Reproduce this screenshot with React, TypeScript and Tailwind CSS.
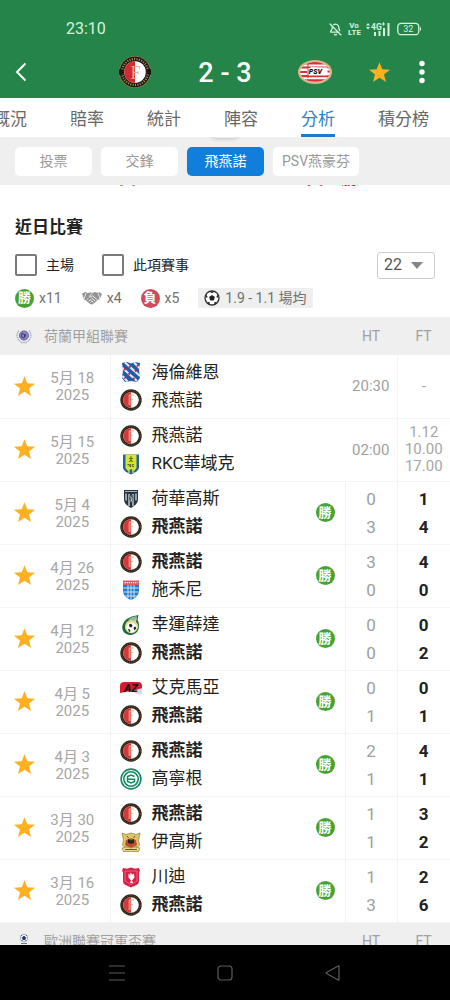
import { useState } from "react";
import { BellOff } from "lucide-react";

type TeamId =
  | "feyenoord" | "heerenveen" | "rkc" | "heracles" | "zwolle"
  | "sittard" | "az" | "groningen" | "eagles" | "twente";

interface Match {
  day: string;
  home: TeamId;
  away: TeamId;
  winner?: "home" | "away";
  ht?: [number, number];
  ft?: [number, number];
  time?: string;
  odds?: string[];
}

const names: Record<TeamId, string> = {
  feyenoord: "飛燕諾",
  heerenveen: "海倫維恩",
  rkc: "RKC華域克",
  heracles: "荷華高斯",
  zwolle: "施禾尼",
  sittard: "幸運薛達",
  az: "艾克馬亞",
  groningen: "高寧根",
  eagles: "伊高斯",
  twente: "川迪",
};

const matches: Match[] = [
  { day: "5月 18", home: "heerenveen", away: "feyenoord", time: "20:30", odds: ["-"] },
  { day: "5月 15", home: "feyenoord", away: "rkc", time: "02:00", odds: ["1.12", "10.00", "17.00"] },
  { day: "5月 4", home: "heracles", away: "feyenoord", winner: "away", ht: [0, 3], ft: [1, 4] },
  { day: "4月 26", home: "feyenoord", away: "zwolle", winner: "home", ht: [3, 0], ft: [4, 0] },
  { day: "4月 12", home: "sittard", away: "feyenoord", winner: "away", ht: [0, 0], ft: [0, 2] },
  { day: "4月 5", home: "az", away: "feyenoord", winner: "away", ht: [0, 1], ft: [0, 1] },
  { day: "4月 3", home: "feyenoord", away: "groningen", winner: "home", ht: [2, 1], ft: [4, 1] },
  { day: "3月 30", home: "feyenoord", away: "eagles", winner: "home", ht: [1, 1], ft: [3, 2] },
  { day: "3月 16", home: "twente", away: "feyenoord", winner: "away", ht: [1, 3], ft: [2, 6] },
];

function Star({ className = "" }: { className?: string }) {
  return (
    <svg viewBox="0 0 24 24" className={className} fill="#fdb020" aria-hidden="true">
      <path d="M12 1.2l2.9 7.3 8.1.5-6.3 5 2.1 7.9L12 17.6l-6.8 4.3L7.3 14 1 9l8.1-.5z" />
    </svg>
  );
}

function Feyenoord() {
  return (
    <svg viewBox="0 0 32 32" className="size-8" aria-hidden="true">
      <circle cx="16" cy="16" r="16" fill="#8d7a45" />
      <circle cx="16" cy="16" r="15.2" fill="#17130f" />
      <circle cx="16" cy="16" r="13" fill="none" stroke="#a78f58" strokeWidth="2.3" strokeDasharray="1.1 1.3" />
      <path d="M2 13.5a14 14 0 0 0 0 5M30 13.5a14 14 0 0 1 0 5" stroke="#17130f" strokeWidth="4" fill="none" />
      <circle cx="16" cy="16" r="10.8" fill="#fff" />
      <path d="M16 5.2a10.8 10.8 0 0 0 0 21.6z" fill="#d12b32" />
      <text x="16.5" y="22.5" textAnchor="middle" fontSize="18" fontFamily="Liberation Serif, serif" fill="#e9a98c">F</text>
    </svg>
  );
}

function Psv() {
  return (
    <svg viewBox="0 0 34 24" className="h-6 w-[34px]" aria-hidden="true">
      <defs>
        <clipPath id="psv"><ellipse cx="17" cy="12" rx="14.8" ry="10" /></clipPath>
      </defs>
      <ellipse cx="17" cy="12" rx="17" ry="12" fill="#d3bb87" />
      <g clipPath="url(#psv)">
        <path d="M0 0h34v24H0z" fill="#fff" />
        <path d="M0 2h34v2.6H0zM0 6.5h34v2H0zM0 11h9v2H0zM27 10.5h7v2H27zM0 15h34v2.2H0zM0 19.2h34v2.5H0z" fill="#d92f38" />
        <path d="M9.500 7l20 .5v8h-20z" fill="#fff" />
        <path d="M10 4v14M7.500 7.500h5" stroke="#b83a46" strokeWidth="1" />
      </g>
      <text x="17.300" y="14" textAnchor="middle" fontSize="7" fontWeight="900" fontStyle="italic" fontFamily="Roboto, sans-serif" fill="#111">PSV</text>
    </svg>
  );
}

function Crest({ team }: { team: TeamId }) {
  return (
    <svg viewBox="0 0 22 22" className="size-[22px] shrink-0" aria-hidden="true">
      {team === "feyenoord" && (
        <>
          <circle cx="11" cy="11" r="10.700" fill="#2b2317" />
          <circle cx="11" cy="11" r="9.300" fill="none" stroke="#75653f" strokeWidth="1" strokeDasharray="1 1.200" />
          <circle cx="11" cy="11" r="7.800" fill="#fff" />
          <path d="M11 3.200a7.800 7.800 0 0 0 0 15.600z" fill="#d5383a" />
          <path d="M9.200 6v10M11 5.500v11M9 6h5M11 10.500h2" stroke="#efae96" strokeWidth="1" fill="none" />
        </>
      )}
      {team === "heerenveen" && (
        <>
          <path d="M2 2l5-1 4 1.500L15 1l5 1-1 7 1 8-3 4-6-1-6 1-3-4 1-8z" fill="#2359a5" />
          <path d="M2.500 7L17 20M5 1.500L20 15M2.500 15l5 5.500M14 1.500l6 6" stroke="#dfe8f5" strokeWidth="2.200" />
          <path d="M4 7.500l1.500 1.500M9 5l1.500 1.500M15 9l1.500 1.500M8.500 12l1.500 1.500M13 17l1.500 1.500M17 4l1.200 1.200M4.500 16.500l1 1" stroke="#c6284d" strokeWidth="2" />
        </>
      )}
      {team === "rkc" && (
        <>
          <path d="M3 1.500h16v12.500c0 4-4 5.500-8 7.500-4-2-8-3.500-8-7.500z" fill="#2462a8" />
          <path d="M5.500 1.500h11v13.500l-2.500 3-3-2-3 2-2.500-3z" fill="#d6e52e" />
          <path d="M11 3v6M9 5.500h4M9 9l2-2 2 2M7.500 11.500h1.800v2M10.500 11v3M14 11.500h-1.700v2H14" stroke="#52692b" strokeWidth="1" fill="none" />
          <path d="M9 17v3M13 17v3" stroke="#d6e52e" strokeWidth="1.300" />
        </>
      )}
      {team === "heracles" && (
        <>
          <path d="M4 2h14v9c0 5-4 7-7 9-3-2-7-4-7-9z" fill="#27343f" />
          <path d="M6 5.500v7M9 6v12M13 6v12M16 5.500v7" stroke="#e7ebee" strokeWidth="1.200" />
          <path d="M5 3.500h12" stroke="#aab4bc" strokeWidth="1" />
          <path d="M9.500 7h3l1 4-2.500 4-2-4z" fill="#4b5965" />
          <path d="M10 8.500l2 2-1 3" stroke="#fff" strokeWidth=".8" fill="none" />
        </>
      )}
      {team === "zwolle" && (
        <>
          <path d="M3 3h16v8c0 5-3 8-8 10-5-2-8-5-8-10z" fill="#2579c8" />
          <path d="M3 1.500h16v4.500H3z" fill="#dc5663" />
          <path d="M4.500 3.700h13" stroke="#fff" strokeWidth="1.200" strokeDasharray="1.300 .8" />
          <path d="M3 9h16M3.500 13h15M5 17h12M8 6v13M11 6v15M14 6v13" stroke="#d8eefa" strokeWidth=".9" />
        </>
      )}
      {team === "sittard" && (
        <>
          <path d="M18.500 1l-1 5c3 5 2 14-6.500 15C3 21 0 14 4 8c3-4 8-6 14.500-7z" fill="#1e6744" />
          <path d="M17 3l-3 3c-5-1-9 2-9 7s6 8 10 5 4-8 1-10z" fill="#e2d98a" />
          <path d="M8 6c3-3 6-3.500 9-4l-2 5c-2-1-4-1.300-7-1z" fill="#8fb8a2" />
          <circle cx="11.500" cy="13.500" r="5" fill="#fff" />
          <path d="M9 10.500l2-1 1.500 2-1 2-2-.5zM13.500 13.500l2-1 .7 2-1.800 2zM8 15l2 .5.5 2-1.500.3z" fill="#17231c" />
        </>
      )}
      {team === "az" && (
        <>
          <path d="M0 16V9c0-3 2-4 4-4h14c3 0 4 2 4 4v3z" fill="#d8192f" />
          <path d="M14 14l8-3v6h-6z" fill="#d8dbdd" />
          <text x="11" y="15" textAnchor="middle" fontSize="11" fontWeight="900" fontStyle="italic" fontFamily="Roboto, sans-serif" fill="#1c1418">AZ</text>
        </>
      )}
      {team === "groningen" && (
        <>
          <circle cx="11" cy="11" r="9.900" fill="#fff" stroke="#158a62" strokeWidth="1.600" />
          <circle cx="11" cy="11" r="7.200" fill="none" stroke="#158a62" strokeWidth="1.600" />
          <path d="M14.500 8.500L11 7 7.500 8.500v5L11 15l3.500-1.500v-2.200H7.500" fill="none" stroke="#158a62" strokeWidth="1.500" />
        </>
      )}
      {team === "eagles" && (
        <>
          <path d="M2 2l4 1.500 5-1.500 5 1.500L20 2l-1.500 7 1 5-2 2H4.500l-2-2 1-5z" fill="#dcc86a" stroke="#8f7932" strokeWidth=".7" />
          <path d="M6 9l5-2 5 2 1 5-6 3-6-3z" fill="#bf4d2f" />
          <path d="M8 8l3 1.500L14 8v4l-3 1-3-1z" fill="#29241b" />
          <path d="M2 17l5-1 4 1 4-1 5 1-1.500 3.500H3.500z" fill="#e7d98d" stroke="#93802e" strokeWidth=".7" />
          <path d="M7 5l1.500 2M15 5l-1.500 2M5 18.500h12" stroke="#5f4924" strokeWidth=".9" />
        </>
      )}
      {team === "twente" && (
        <>
          <path d="M3 2l4 .8 4-1.300 4 1.300L19 2l1 3-1 1v9c0 4-4 4.500-8 6.500-4-2-8-2.500-8-6.500V6L2 5z" fill="#d91f45" />
          <path d="M5 5h12v10l-6 3.500L5 15z" fill="none" stroke="#ef7e91" strokeWidth=".7" />
          <path d="M8.500 7.500l2 2-.5-3 2.500 2 1.500-1 .5 4-2.500 3 1 2.500h-3l1-2.500-2.500-3z" fill="#fff" />
        </>
      )}
    </svg>
  );
}

function Handshake() {
  return (
    <svg viewBox="0 0 20 14" className="h-[14px] w-5 shrink-0" aria-hidden="true">
      <path d="M0 2.500L3.500 1l2 1 3-.5L10 2l3-1 3 1 1-1 3 2-2.500 5.500-1.500 0-3.500 3.500-2.500 1.500-2-.5-4.500-4-1.500-.5z" fill="#929292" />
      <path d="M4 2.300L2 8M16.300 2.300L18 8" stroke="#fff" strokeWidth=".8" />
      <path d="M10 2.500L7.200 5.500c.8 1 2 .5 3.300-.7L15 8.500M9.500 7l3.700 3M8 8.500l3.300 3M5 8.500l1.300-1.200M6.700 10l1.300-1.200M8.500 11.500l1-1" stroke="#fff" strokeWidth=".9" fill="none" />
    </svg>
  );
}

function Ball() {
  return (
    <svg viewBox="0 0 16 16" className="size-4" aria-hidden="true">
      <circle cx="8" cy="8" r="7" fill="#fff" stroke="#333" strokeWidth="1.300" />
      <path d="M8 5l2.900 2.100-1.100 3.400H6.200L5.100 7.100zM5.300 1.500h5.400L8 3.300zM1.200 7.800L2.700 4.300l.9 3zM14.800 7.800l-1.500-3.500-.9 3zM3 12.500l3 2.300-.6-3zM13 12.500l-3 2.300.6-3z" fill="#222" />
    </svg>
  );
}

function Result({ kind }: { kind: "勝" | "負" }) {
  return (
    <span
      className={`flex size-[19px] shrink-0 items-center justify-center rounded-full text-[13px] leading-[18px] font-bold text-white ${
        kind === "勝" ? "bg-[#48a233]" : "bg-[#d1495d]"
      }`}
    >
      {kind}
    </span>
  );
}

function LeagueHead({ name, children }: { name: string; children: React.ReactNode }) {
  return (
    <thead className="bg-[#efefef] text-[14px] text-[#a0a0a0]">
      <tr className="h-[38px]">
        <th scope="col" colSpan={3} className="p-0 pl-4 text-left font-normal">
          <span className="flex items-center gap-[12px]">
            {children}
            {name}
          </span>
        </th>
        <th scope="col" className="p-0 text-center font-normal">HT</th>
        <th scope="col" className="p-0 text-center font-normal">FT</th>
      </tr>
    </thead>
  );
}

function Columns() {
  return (
    <colgroup>
      <col className="w-12" />
      <col className="w-[62px]" />
      <col />
      <col className="w-[52px]" />
      <col className="w-[53px]" />
    </colgroup>
  );
}

function Row({ m }: { m: Match }) {
  const team = (id: TeamId, won: boolean) => (
    <div className={`flex h-7 items-center gap-[10px] ${won ? "font-bold" : ""}`}>
      <Crest team={id} />
      {names[id]}
    </div>
  );
  return (
    <tr className="h-[63px] border-b border-[#f5f5f5]">
      <td className="p-0">
        <button aria-label="收藏" className="mx-auto block">
          <Star className="size-[23px]" />
        </button>
      </td>
      <td className="border-r border-[#f3f3f3] p-0 pt-[2px] pr-[13px] text-center text-[15px] leading-[17px] whitespace-nowrap text-[#a6a6a6]">
        {m.day}
        <br />
        2025
      </td>
      <td className={`p-0 pl-[9px] text-[17px] text-[#222] ${m.ft ? "border-r border-[#f3f3f3]" : ""}`}>
        <div className="flex items-center justify-between pr-[10px]">
          <div>
            {team(m.home, m.winner === "home")}
            {team(m.away, m.winner === "away")}
          </div>
          {m.winner && <Result kind="勝" />}
        </div>
      </td>
      <td className="border-r border-[#f3f3f3] p-0 text-center text-[#a0a0a0]">
        {m.ht ? (
          m.ht.map((n, i) => <div key={i} className="text-[17px] leading-7">{n}</div>)
        ) : (
          <span className="text-[15px]">{m.time}</span>
        )}
      </td>
      <td className="p-0 text-center">
        {m.ft
          ? m.ft.map((n, i) => <div key={i} className="text-[17px] leading-7 font-bold text-[#222]">{n}</div>)
          : m.odds?.map((o) => <div key={o} className="text-[15px] leading-[17px] text-[#a6a6a6]">{o}</div>)}
      </td>
    </tr>
  );
}

const tabs = ["概況", "賠率", "統計", "陣容", "分析", "積分榜"];
const chips = ["投票", "交鋒", "飛燕諾", "PSV燕豪芬"];

export default function App() {
  const [tab, setTab] = useState("分析");
  const [chip, setChip] = useState("飛燕諾");

  return (
    <div className="flex h-screen flex-col overflow-hidden bg-white font-[Roboto,'Noto_Sans_CJK_TC',sans-serif]">
      <header className="shrink-0 bg-[#25844a] text-white">
        <div className="flex h-[46px] items-center justify-between pt-3 pr-[28px] pl-[66px] text-[#d5f4dc]">
          <span className="text-[16px]">23:10</span>
          <div className="flex items-center gap-[6px]">
            <BellOff size={13} strokeWidth={2.4} />
            <span className="w-[12px] text-center text-[8px] leading-[7px] font-bold">
              Vo
              <br />
              LTE
            </span>
            <svg viewBox="0 0 25 14" className="h-[14px] w-[25px]" fill="currentColor" aria-hidden="true">
              <path d="M2 1l2 2.500H0zM2 7.500L0 5h4zM8 10h2v4H8zM12.500 9h2v5h-2zM17 6h2v8h-2zM21.500 1h2v13h-2z" />
              <text x="5" y="7.500" fontSize="8.500" fontWeight="700" fontFamily="Roboto, sans-serif">4G</text>
              <path d="M15.800 2h3.400M17.500 .3v3.400" stroke="currentColor" strokeWidth="1" />
            </svg>
            <svg viewBox="0 0 25 14" className="h-[14px] w-[25px]" aria-hidden="true">
              <rect x=".8" y="1.300" width="21" height="11.400" rx="3.500" fill="none" stroke="currentColor" strokeWidth="1.300" />
              <path d="M23 5c1.500.8 1.500 3.200 0 4z" fill="currentColor" />
              <text x="11.300" y="10.200" textAnchor="middle" fontSize="9" fontFamily="Roboto, sans-serif" fill="currentColor">32</text>
            </svg>
          </div>
        </div>
        <div className="grid h-[52px] grid-cols-[90px_1fr_90px_90px_90px] items-center">
          <button aria-label="返回" className="ml-[15px] justify-self-start">
            <svg viewBox="0 0 12 20" className="h-5 w-3" fill="none" stroke="#fff" strokeWidth="2">
              <path d="M10.500 1.500L2 10l8.500 8.500" />
            </svg>
          </button>
          <div className="justify-self-center">
            <Feyenoord />
          </div>
          <h1 className="pt-[2px] text-center text-[27px] leading-8 font-medium whitespace-nowrap">2 - 3</h1>
          <div className="justify-self-center">
            <Psv />
          </div>
          <div className="flex items-center justify-between pr-[25px] pl-2">
            <button aria-label="收藏">
              <Star className="size-[23px]" />
            </button>
            <button aria-label="更多">
              <svg viewBox="0 0 6 24" className="h-6 w-[6px]" fill="#fff">
                <circle cx="3" cy="3.500" r="2.700" />
                <circle cx="3" cy="12" r="2.700" />
                <circle cx="3" cy="20.500" r="2.700" />
              </svg>
            </button>
          </div>
        </div>
      </header>

      <nav className="flex h-[39px] shrink-0 gap-[43px] overflow-hidden text-[17px] whitespace-nowrap text-[#686868]">
        {tabs.map((t) => (
          <button
            key={t}
            onClick={() => setTab(t)}
            className={`shrink-0 border-b-[3px] pt-[7px] first:-ml-[7px] ${
              t === tab ? "border-[#2679c3] text-[#2a83cf]" : "border-transparent"
            }`}
          >
            {t}
          </button>
        ))}
      </nav>

      <div className="relative flex h-12 shrink-0 items-center gap-[9px] overflow-hidden bg-[#efefef] px-[15px] text-[14px]">
        <span className="absolute -top-[11px] left-1/2 h-3 w-7 -translate-x-1/2 rounded-full shadow-[0_0_4px_#aaa]" />
        {chips.map((c) => (
          <button
            key={c}
            onClick={() => setChip(c)}
            className={`h-[29px] min-w-[77px] rounded-[5px] px-[9px] ${
              c === chip ? "bg-[#117edb] text-white" : "bg-white text-[#999]"
            }`}
          >
            {c}
          </button>
        ))}
      </div>

      <main className="min-h-0 flex-1 overflow-hidden">
        <div className="flex h-[3px] items-end overflow-hidden text-center text-[17px] leading-[19px]">
          <span className="w-1/2 pl-4 text-[#4d8a2c]">6 負</span>
          <span className="w-1/2 pr-6 text-[#d0213f]">6 負 3 勝</span>
        </div>
        <section className="px-[15px] pt-[26px] pb-[9px]">
          <h2 className="text-[17px] leading-[26px] font-bold text-[#222]">近日比賽</h2>
          <div className="mt-[12px] flex h-[26px] items-center text-[14px] text-[#222]">
            <label className="mr-[28px] flex items-center gap-[9px]">
              <input type="checkbox" className="size-[22px] appearance-none rounded-[2px] border-2 border-[#7a7a7a] checked:bg-[#117edb]" />
              主場
            </label>
            <label className="flex items-center gap-[9px]">
              <input type="checkbox" className="size-[22px] appearance-none rounded-[2px] border-2 border-[#7a7a7a] checked:bg-[#117edb]" />
              此項賽事
            </label>
            <div className="relative ml-auto">
              <select aria-label="場數" className="h-[27px] w-[58px] appearance-none rounded-[3px] border border-[#ccc] bg-white pl-[6px] text-[16px] text-[#555]">
                <option>22</option>
                <option>10</option>
              </select>
              <svg viewBox="0 0 12 7" className="pointer-events-none absolute top-[10px] right-[12px] h-[7px] w-3" fill="#858585">
                <path d="M0 0h12L6 7z" />
              </svg>
            </div>
          </div>
          <div className="mt-[10px] flex h-5 items-center gap-[5px] text-[14px] text-[#707070]">
            <Result kind="勝" />
            <span className="mr-[15px]">x11</span>
            <Handshake />
            <span className="mr-[14px]">x4</span>
            <Result kind="負" />
            <span className="mr-[14px]">x5</span>
            <span className="flex h-5 items-center gap-[5px] bg-[#efefef] px-[6px]">
              <Ball />
              1.9 - 1.1 場均
            </span>
          </div>
        </section>

        <table className="w-full table-fixed border-collapse">
          <Columns />
          <LeagueHead name="荷蘭甲組聯賽">
            <svg viewBox="0 0 16 16" className="size-4" fill="none" stroke="#5b5599" aria-hidden="true">
              <circle cx="8" cy="7.500" r="4.500" fill="#8e8abc" strokeWidth="1" />
              <path d="M6 5.500l4 1.500-2 3-2.500-1zM8.500 6v3" stroke="#3c3780" strokeWidth="1" />
              <path d="M3 2.500C0 6 .5 11 4.500 13.500M13 2.500c3 3.500 2.500 8.500-1.500 11M5 14.500h6" stroke="#a7a4cd" strokeWidth="1.300" strokeDasharray="1.500 .7" />
            </svg>
          </LeagueHead>
          <tbody>
            {matches.map((m) => (
              <Row key={m.day} m={m} />
            ))}
          </tbody>
        </table>
        <table className="w-full table-fixed border-collapse">
          <Columns />
          <LeagueHead name="歐洲聯賽冠軍盃賽">
            <svg viewBox="0 0 16 16" className="size-4" aria-hidden="true">
              <circle cx="8" cy="4" r="3.700" fill="#fff" stroke="#8a94b5" strokeWidth=".8" />
              <path d="M8 2.300l1.700 1.200-.6 2H6.900l-.6-2zM5 1.500l1 .2M11 1.500l-1 .2M5.500 7l.8-.8M10.500 7l-.8-.8" fill="#263968" stroke="#263968" strokeWidth=".9" />
              <path d="M5 9.500h6M0 12.500h16" stroke="#6d789c" strokeWidth="1.200" />
            </svg>
          </LeagueHead>
        </table>
      </main>

      <footer className="flex h-[55px] shrink-0 items-center justify-around bg-black px-[63px]">
        <button aria-label="最近">
          <svg viewBox="0 0 16 16" className="size-4" stroke="#5c5c5c" strokeWidth="1.200">
            <path d="M0 1h16M0 8h16M0 15h16" />
          </svg>
        </button>
        <button aria-label="主畫面">
          <svg viewBox="0 0 16 16" className="size-4" fill="none" stroke="#5c5c5c" strokeWidth="1.200">
            <rect x="1" y="1" width="14" height="14" rx="3" />
          </svg>
        </button>
        <button aria-label="返回上頁">
          <svg viewBox="0 0 16 16" className="size-4" fill="none" stroke="#5c5c5c" strokeWidth="1.200" strokeLinejoin="round">
            <path d="M14 1.200v13.600q0 .8-.8.300L1.500 8.500q-.8-.5 0-1L13.200.9q.8-.5.800.3z" />
          </svg>
        </button>
      </footer>
    </div>
  );
}
